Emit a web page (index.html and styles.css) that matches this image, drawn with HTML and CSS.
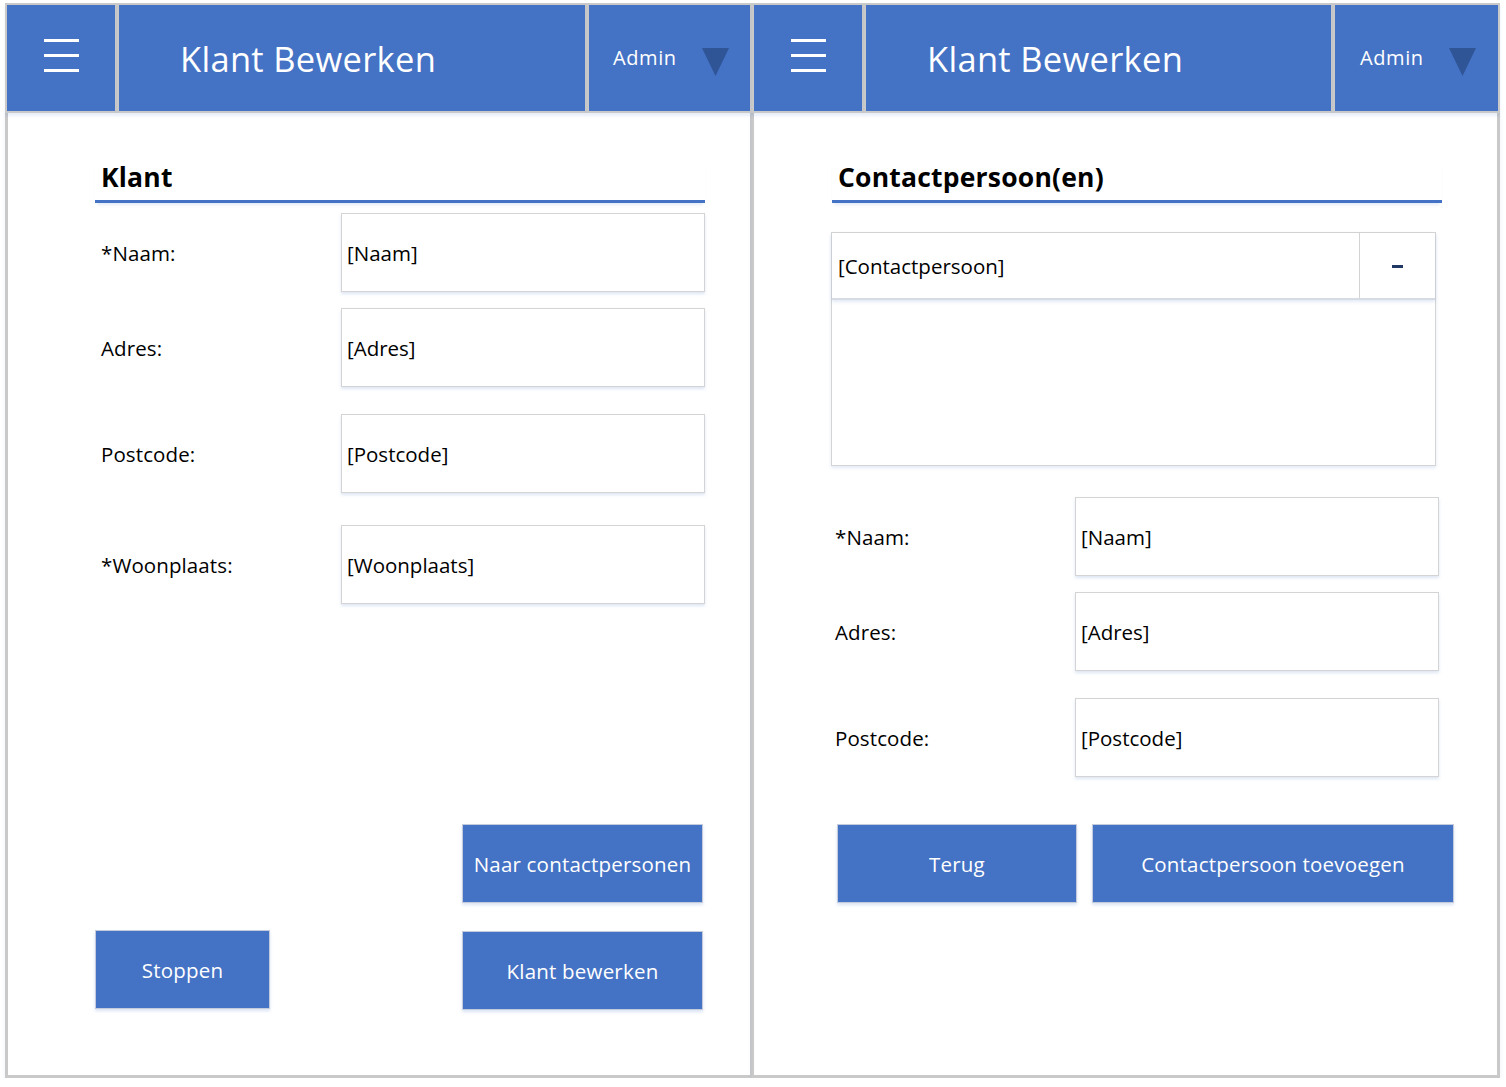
FILE: index.html
```html
<!DOCTYPE html>
<html lang="nl">
<head>
<meta charset="utf-8">
<title>Klant Bewerken</title>
<link rel="stylesheet" href="styles.css">
</head>
<body>
<div class="app">
  <section class="panel panel-left">
    <header class="topbar">
      <div class="cell menu-cell">
        <svg class="hamburger" width="35" height="33" viewBox="0 0 35 33"><rect x="0" y="0" width="35" height="3" fill="#fff"/><rect x="0" y="15" width="35" height="3" fill="#fff"/><rect x="0" y="30" width="35" height="3" fill="#fff"/></svg>
      </div>
      <div class="cell title-cell">Klant Bewerken</div>
      <div class="cell admin-cell">
        <span class="admin-label">Admin</span>
        <svg class="caret" width="27" height="28" viewBox="0 0 27 28"><polygon points="0,0 27,0 13.5,28" fill="#2f5597"/></svg>
      </div>
    </header>
    <div class="panel-body body-left">
      <h2 class="section-title">Klant</h2>
      <div class="form form-left">
        <div class="row"><span class="label">*Naam:</span><div class="input">[Naam]</div></div>
        <div class="row gap-s"><span class="label">Adres:</span><div class="input">[Adres]</div></div>
        <div class="row gap-m"><span class="label">Postcode:</span><div class="input">[Postcode]</div></div>
        <div class="row gap-l"><span class="label">*Woonplaats:</span><div class="input">[Woonplaats]</div></div>
      </div>
      <div class="actions-left">
        <div class="act-row act-end"><button class="btn btn-wide">Naar contactpersonen</button></div>
        <div class="act-row act-split"><button class="btn btn-stop">Stoppen</button><button class="btn btn-wide btn-low">Klant bewerken</button></div>
      </div>
    </div>
  </section>

  <section class="panel panel-right">
    <header class="topbar">
      <div class="cell menu-cell">
        <svg class="hamburger" width="35" height="33" viewBox="0 0 35 33"><rect x="0" y="0" width="35" height="3" fill="#fff"/><rect x="0" y="15" width="35" height="3" fill="#fff"/><rect x="0" y="30" width="35" height="3" fill="#fff"/></svg>
      </div>
      <div class="cell title-cell">Klant Bewerken</div>
      <div class="cell admin-cell admin-right">
        <span class="admin-label">Admin</span>
        <svg class="caret" width="27" height="28" viewBox="0 0 27 28"><polygon points="0,0 27,0 13.5,28" fill="#2f5597"/></svg>
      </div>
    </header>
    <div class="panel-body body-right">
      <h2 class="section-title">Contactpersoon(en)</h2>
      <div class="list">
        <div class="list-item">
          <span class="item-name">[Contactpersoon]</span>
          <span class="item-remove"><span class="minus"></span></span>
        </div>
      </div>
      <div class="form form-right">
        <div class="row"><span class="label">*Naam:</span><div class="input">[Naam]</div></div>
        <div class="row gap-s"><span class="label">Adres:</span><div class="input">[Adres]</div></div>
        <div class="row gap-m"><span class="label">Postcode:</span><div class="input">[Postcode]</div></div>
      </div>
      <div class="actions-right">
        <button class="btn btn-back">Terug</button>
        <button class="btn btn-add">Contactpersoon toevoegen</button>
      </div>
    </div>
  </section>
</div>
</body>
</html>
```

FILE: styles.css
```css
* { box-sizing: border-box; }

html, body {
  margin: 0;
  padding: 0;
  background: #ffffff;
}

body {
  font-family: "Open Sans", "Liberation Sans", sans-serif;
  color: #000;
}

.app {
  display: flex;
  padding: 3px 0 0 5px;
}

.panel {
  display: flex;
  flex-direction: column;
  height: 1075px;
}

.panel-left { width: 747px; }
.panel-right { width: 748px; }

.topbar {
  display: flex;
  height: 110px;
  flex: none;
  position: relative;
  z-index: 1;
}

.cell {
  background: #4472c4;
  border: 2px solid #c9c9c9;
  color: #fff;
  display: flex;
  align-items: center;
  box-shadow: 0 3px 3px rgba(68, 114, 196, 0.12);
}

.menu-cell {
  width: 112px;
  justify-content: center;
  padding-bottom: 5px;
}

.hamburger { display: block; }

.title-cell {
  flex: 1;
  padding-left: 61px;
  font-size: 34.5px;
  letter-spacing: 0.3px;
}

.admin-cell {
  width: 165px;
  padding-left: 24px;
  font-size: 20px;
}

.admin-right {
  width: 167px;
  padding-left: 25px;
}

.admin-label {
  letter-spacing: 0.6px;
  margin-top: -1px;
}

.caret {
  display: block;
  margin-left: 25px;
  margin-top: 8px;
}

.panel-body {
  flex: 1;
  border: 3px solid #c9c9c9;
  border-top: none;
  box-shadow: 0 3px 4px rgba(68, 114, 196, 0.1);
}

.body-left {
  padding-left: 87px;
  border-right-width: 2px;
}

.body-right {
  padding-left: 78px;
  border-left-width: 2px;
}

.section-title {
  margin: 46px 0 0 0;
  width: 610px;
  font-size: 26.5px;
  line-height: 36px;
  font-weight: 700;
  padding: 0 0 5px 6px;
  border-bottom: 3px solid #4472c4;
  box-shadow: 0 4px 3px -2px rgba(68, 114, 196, 0.15);
  letter-spacing: 0.2px;
}

.form {
  display: flex;
  flex-direction: column;
}

.form-left { margin-top: 10px; }
.form-right { margin-top: 31px; }

.row {
  display: flex;
  align-items: center;
  height: 79px;
}

.gap-s { margin-top: 16px; }
.gap-m { margin-top: 27px; }
.gap-l { margin-top: 32px; }

.label {
  font-size: 20.5px;
  padding-left: 6px;
  letter-spacing: 0.1px;
}

.form-left .label { width: 246px; }
.form-right .label { width: 243px; padding-left: 3px; }

.input {
  width: 364px;
  height: 79px;
  border: 1px solid #d4d4d4;
  background: #fff;
  display: flex;
  align-items: center;
  padding-left: 5px;
  font-size: 20.5px;
  box-shadow: 0 2px 3px rgba(68, 114, 196, 0.18);
}

.btn {
  font-family: "Open Sans", "Liberation Sans", sans-serif;
  font-size: 20.5px;
  color: #fff;
  background: #4472c4;
  border: 1px solid #c3cbdc;
  height: 79px;
  padding: 0;
  box-shadow: 0 2px 3px rgba(68, 114, 196, 0.2);
  letter-spacing: 0.2px;
}

.actions-left {
  margin-top: 220px;
  width: 610px;
}

.act-row {
  display: flex;
}

.act-end {
  justify-content: flex-end;
  padding-right: 2px;
}

.act-split {
  justify-content: space-between;
  align-items: flex-start;
  padding-right: 2px;
  margin-top: 27px;
}

.btn-wide { width: 241px; }
.btn-stop { width: 175px; }
.btn-low { margin-top: 1px; }

.list {
  margin-top: 29px;
  margin-left: -1px;
  width: 605px;
  height: 234px;
  border: 1px solid #d4d4d4;
  box-shadow: 0 2px 3px rgba(68, 114, 196, 0.15);
}

.list-item {
  display: flex;
  height: 67px;
  border-bottom: 2px solid #d7dbe3;
  box-shadow: 0 2px 3px rgba(68, 114, 196, 0.15);
}

.item-name {
  flex: 1;
  display: flex;
  align-items: center;
  padding-left: 6px;
  font-size: 20.5px;
}

.item-remove {
  width: 76px;
  border-left: 1px solid #d4d4d4;
  display: flex;
  align-items: center;
  justify-content: center;
}

.minus {
  display: block;
  width: 11px;
  height: 3px;
  background: #203864;
  margin-top: 2px;
}

.actions-right {
  display: flex;
  margin-top: 47px;
  padding-left: 5px;
  gap: 15px;
}

.btn-back { width: 240px; }
.btn-add { width: 362px; }
```
